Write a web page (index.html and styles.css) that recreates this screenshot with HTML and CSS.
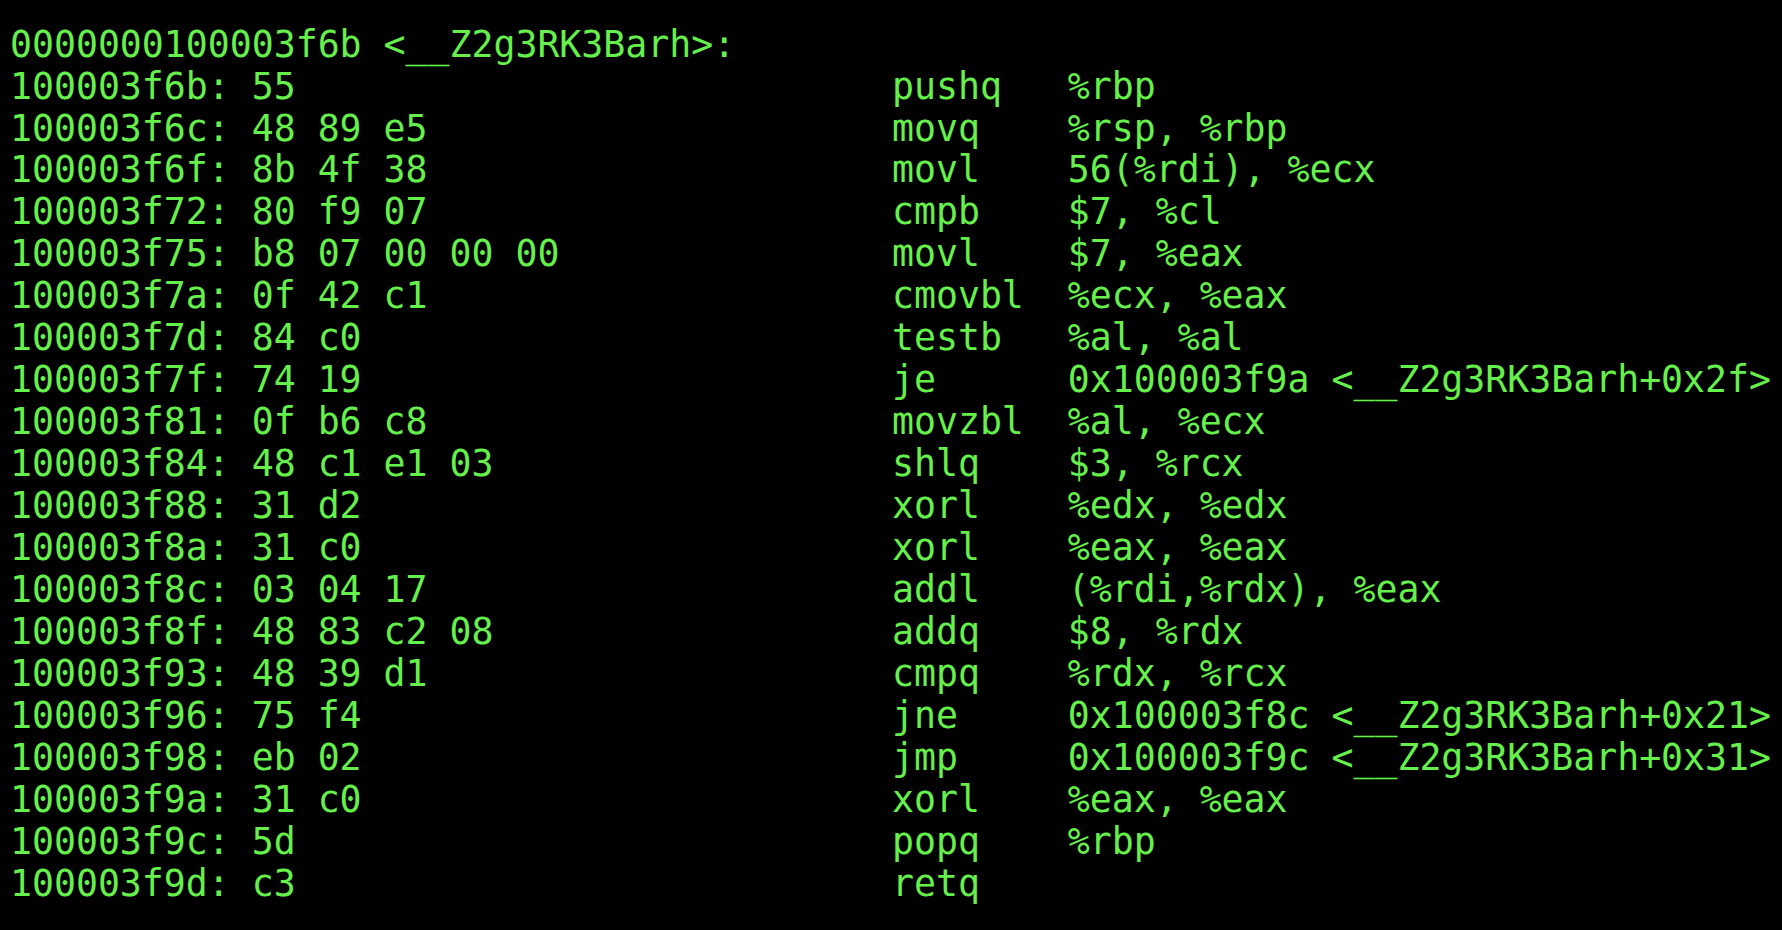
FILE: index.html
```html
<!DOCTYPE html>
<html>
<head>
<meta charset="utf-8">
<link rel="stylesheet" href="styles.css">
</head>
<body>
<main class="listing">
  <div class="head">0000000100003f6b &lt;__Z2g3RK3Barh&gt;:</div>
  <div class="row"><span class="bytes">100003f6b: 55</span><span class="op">pushq</span><span class="args">%rbp</span></div>
  <div class="row"><span class="bytes">100003f6c: 48 89 e5</span><span class="op">movq</span><span class="args">%rsp, %rbp</span></div>
  <div class="row"><span class="bytes">100003f6f: 8b 4f 38</span><span class="op">movl</span><span class="args">56(%rdi), %ecx</span></div>
  <div class="row"><span class="bytes">100003f72: 80 f9 07</span><span class="op">cmpb</span><span class="args">$7, %cl</span></div>
  <div class="row"><span class="bytes">100003f75: b8 07 00 00 00</span><span class="op">movl</span><span class="args">$7, %eax</span></div>
  <div class="row"><span class="bytes">100003f7a: 0f 42 c1</span><span class="op">cmovbl</span><span class="args">%ecx, %eax</span></div>
  <div class="row"><span class="bytes">100003f7d: 84 c0</span><span class="op">testb</span><span class="args">%al, %al</span></div>
  <div class="row"><span class="bytes">100003f7f: 74 19</span><span class="op">je</span><span class="args">0x100003f9a &lt;__Z2g3RK3Barh+0x2f&gt;</span></div>
  <div class="row"><span class="bytes">100003f81: 0f b6 c8</span><span class="op">movzbl</span><span class="args">%al, %ecx</span></div>
  <div class="row"><span class="bytes">100003f84: 48 c1 e1 03</span><span class="op">shlq</span><span class="args">$3, %rcx</span></div>
  <div class="row"><span class="bytes">100003f88: 31 d2</span><span class="op">xorl</span><span class="args">%edx, %edx</span></div>
  <div class="row"><span class="bytes">100003f8a: 31 c0</span><span class="op">xorl</span><span class="args">%eax, %eax</span></div>
  <div class="row"><span class="bytes">100003f8c: 03 04 17</span><span class="op">addl</span><span class="args">(%rdi,%rdx), %eax</span></div>
  <div class="row"><span class="bytes">100003f8f: 48 83 c2 08</span><span class="op">addq</span><span class="args">$8, %rdx</span></div>
  <div class="row"><span class="bytes">100003f93: 48 39 d1</span><span class="op">cmpq</span><span class="args">%rdx, %rcx</span></div>
  <div class="row"><span class="bytes">100003f96: 75 f4</span><span class="op">jne</span><span class="args">0x100003f8c &lt;__Z2g3RK3Barh+0x21&gt;</span></div>
  <div class="row"><span class="bytes">100003f98: eb 02</span><span class="op">jmp</span><span class="args">0x100003f9c &lt;__Z2g3RK3Barh+0x31&gt;</span></div>
  <div class="row"><span class="bytes">100003f9a: 31 c0</span><span class="op">xorl</span><span class="args">%eax, %eax</span></div>
  <div class="row"><span class="bytes">100003f9c: 5d</span><span class="op">popq</span><span class="args">%rbp</span></div>
  <div class="row"><span class="bytes">100003f9d: c3</span><span class="op">retq</span><span class="args"></span></div>
</main>
</body>
</html>
```
FILE: styles.css
```css
html, body {
  margin: 0;
  padding: 0;
  background: #000;
  height: 100%;
}
body {
  overflow: hidden;
}
.listing {
  display: flex;
  flex-direction: column;
  padding: 23.6px 0 0 10px;
  font-family: "DejaVu Sans Mono", monospace;
  font-size: 36.5px;
  line-height: 41.95px;
  color: #66f04c;
}
.head,
.bytes,
.op,
.args {
  white-space: pre;
}
.row {
  display: grid;
  grid-template-columns: calc(40ch + 3px) 8ch auto;
}
```
